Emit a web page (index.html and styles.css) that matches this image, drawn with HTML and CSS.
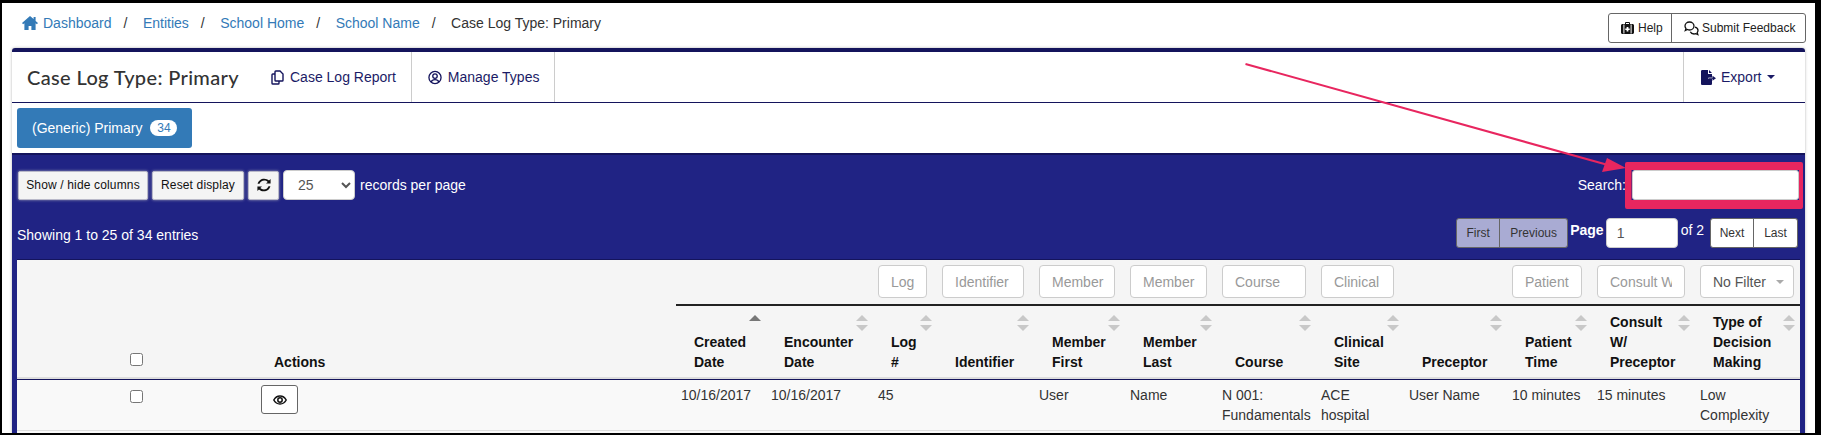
FILE: index.html
```html
<!DOCTYPE html>
<html lang="en">
<head>
<meta charset="utf-8">
<title>Case Log Type: Primary</title>
<link rel="stylesheet" href="styles.css">
</head>
<body>
<div class="page">
  <div class="topbar">
    <nav class="crumbs">
      <svg class="home-icon" viewBox="0 0 16 14"><path d="M8 0 0 7l1.1 1.3L2.400 7.200V14h4.200v-4h2.800v4h4.200V7.200l1.300 1.100L16 7l-2.400-2.100V1h-2v2.100z"/></svg>
      <a class="crumb">Dashboard</a><span class="sep">/</span>
      <a class="crumb">Entities</a><span class="sep">/</span>
      <a class="crumb">School Home</a><span class="sep">/</span>
      <a class="crumb">School Name</a><span class="sep">/</span>
      <span class="crumb-current">Case Log Type: Primary</span>
    </nav>
    <div class="help-group">
      <a class="help-btn help-first">
        <svg class="ico-help" viewBox="0 0 13 12"><path d="M4 2V1.200C4 .5 4.500 0 5.200 0h2.600C8.500 0 9 .5 9 1.200V2h2.500c.8 0 1.500.7 1.500 1.500v7c0 .8-.7 1.500-1.500 1.500h-10C.7 12 0 11.300 0 10.500v-7C0 2.700.7 2 1.500 2zm1-1v1h3V1zM2.400 2.500v9h1v-9zm7.200 0v9h1v-9zM5.600 5v1.500H4.300v1.400h1.300v1.500h1.800V7.900h1.300V6.500H7.400V5z" fill-rule="evenodd"/></svg>
        Help
      </a>
      <a class="help-btn help-second">
        <svg class="ico-comments" viewBox="0 0 15 15"><path d="M5.500 1C3 1 1 2.800 1 5c0 1 .4 1.800 1 2.500L1.300 9.500 3.500 8.500c.6.300 1.300.5 2 .5 2.500 0 4.500-1.800 4.500-4S8 1 5.500 1z"/><path d="M11 6.200c1.700.4 3 1.800 3 3.400 0 .8-.3 1.500-.8 2.100l.6 1.800-2-.9c-.5.200-1.100.4-1.800.4-1.700 0-3.100-.9-3.700-2.200"/></svg>
        Submit Feedback
      </a>
    </div>
  </div>

  <section class="card">
    <header class="card-head">
      <h1 class="card-title">Case Log Type: Primary</h1>
      <a class="head-link">
        <svg class="ico-line" viewBox="0 0 14 15"><path d="M5 1.800C5 1.300 5.400 1 5.800 1h4.200l3 3v6.200c0 .5-.4.800-.8.800H5.800c-.4 0-.8-.3-.8-.8z"/><path d="M5 4H2.800C2.300 4 2 4.400 2 4.800v8.400c0 .5.300.8.800.8h5.400c.5 0 .8-.3.8-.8V11"/></svg>
        Case Log Report
      </a>
      <a class="head-link">
        <svg class="ico-line" viewBox="0 0 15 15"><circle cx="7.500" cy="7.500" r="6.500"/><circle cx="7.500" cy="6" r="2.400"/><path d="M3.400 12.300c.6-1.700 2-2.500 4.100-2.500s3.500.8 4.100 2.500"/></svg>
        Manage Types
      </a>
      <a class="head-link export-link">
        <svg class="ico-export" viewBox="0 0 15 15"><path d="M1.300 0H7v4h4v3.500H7.500v1.500H11v4.700c0 .7-.6 1.300-1.300 1.300H1.300C.6 15 0 14.400 0 13.700V1.300C0 .6.600 0 1.300 0zM8 0l3 3H8z"/><path d="M8 7.800h3.500V5.800L15 8.300l-3.500 2.500v-2H8z"/></svg>
        Export
        <span class="caret"></span>
      </a>
    </header>

    <div class="tabs">
      <a class="tab">(Generic) Primary <span class="badge">34</span></a>
    </div>

    <div class="panel">
      <div class="toolbar">
        <div class="tools">
          <button class="tool-btn tool-show">Show / hide columns</button>
          <button class="tool-btn tool-reset">Reset display</button>
          <button class="tool-btn tool-icon">
            <svg class="ico-refresh" viewBox="0 0 14 14"><path d="M13.600 1v4.600H9L10.700 3.900C9.800 3 8.500 2.500 7.200 2.500 5 2.500 3.200 3.800 2.500 5.800H.6C1.300 2.800 4 .7 7.200.7c1.800 0 3.500.7 4.800 1.900zM.4 13V8.400H5L3.300 10.100c.9.900 2.200 1.400 3.500 1.400 2.200 0 4-1.300 4.700-3.300h1.900c-.7 3-3.400 5.100-6.600 5.100-1.800 0-3.500-.7-4.800-1.900z"/></svg>
          </button>
          <select class="page-size"><option>25</option></select>
          <span class="per-page">records per page</span>
        </div>
        <label class="search"><span>Search:</span><input class="search-input" type="text"></label>
      </div>

      <div class="pager-row">
        <span class="info">Showing 1 to 25 of 34 entries</span>
        <div class="pager">
          <div class="pager-group">
            <a class="pg-btn pg-off pg-first">First</a><a class="pg-btn pg-off pg-prev">Previous</a>
          </div>
          <strong class="pg-label">Page</strong>
          <input class="pg-input" type="text" value="1">
          <span class="pg-of">of 2</span>
          <div class="pager-group">
            <a class="pg-btn pg-next">Next</a><a class="pg-btn pg-last">Last</a>
          </div>
        </div>
      </div>

      <table class="grid">
        <colgroup>
          <col class="c-check"><col class="c-actions"><col class="c-created"><col class="c-enc"><col class="c-log"><col class="c-id"><col class="c-first"><col class="c-last"><col class="c-course"><col class="c-site"><col class="c-prec"><col class="c-time"><col class="c-consult"><col class="c-type">
        </colgroup>
        <thead>
          <tr class="filters">
            <td class="no-rule"></td>
            <td class="no-rule"></td>
            <td></td>
            <td></td>
            <td><input class="filter" placeholder="Log"></td>
            <td><input class="filter" placeholder="Identifier"></td>
            <td><input class="filter filter-tight" placeholder="Member"></td>
            <td><input class="filter filter-tight" placeholder="Member"></td>
            <td><input class="filter" placeholder="Course"></td>
            <td><input class="filter" placeholder="Clinical"></td>
            <td></td>
            <td><input class="filter" placeholder="Patient"></td>
            <td><input class="filter" placeholder="Consult W/Preceptor"></td>
            <td class="last-filter"><div class="filter filter-select">No Filter<span class="caret caret-light"></span></div></td>
          </tr>
          <tr class="heads">
            <th class="th-check"><input type="checkbox"></th>
            <th>Actions</th>
            <th>Created<br>Date<span class="sort sort-up"></span></th>
            <th>Encounter<br>Date<span class="sort"></span></th>
            <th>Log<br>#<span class="sort"></span></th>
            <th>Identifier<span class="sort"></span></th>
            <th>Member<br>First<span class="sort"></span></th>
            <th>Member<br>Last<span class="sort"></span></th>
            <th>Course<span class="sort"></span></th>
            <th>Clinical<br>Site<span class="sort"></span></th>
            <th>Preceptor<span class="sort"></span></th>
            <th>Patient<br>Time<span class="sort"></span></th>
            <th>Consult<br>W/<br>Preceptor<span class="sort"></span></th>
            <th>Type of<br>Decision<br>Making<span class="sort"></span></th>
          </tr>
        </thead>
        <tbody>
          <tr>
            <td class="td-check"><input type="checkbox"></td>
            <td class="td-action"><button class="eye-btn"><svg class="ico-eye" viewBox="0 0 14 10"><path d="M.8 5C2.200 2.400 4.400 1 7 1s4.800 1.400 6.200 4C11.800 7.600 9.600 9 7 9S2.200 7.600.8 5z"/><circle cx="7" cy="5" r="2.200"/></svg></button></td>
            <td>10/16/2017</td>
            <td>10/16/2017</td>
            <td>45</td>
            <td></td>
            <td>User</td>
            <td>Name</td>
            <td>N 001:<br>Fundamentals</td>
            <td>ACE<br>hospital</td>
            <td>User Name</td>
            <td>10 minutes</td>
            <td>15 minutes</td>
            <td>Low<br>Complexity</td>
          </tr>
          <tr class="next-row"><td colspan="14"></td></tr>
        </tbody>
      </table>
    </div>
  </section>

  <svg class="annotation" viewBox="2 3 1813 430">
    <line x1="1245.500" y1="64" x2="1608" y2="165" />
    <path class="fill" d="M1602 172 1607 158 1626 168z"/>
    <path class="fill" fill-rule="evenodd" d="M1627 162H1801a2 2 0 0 1 2 2V207a2 2 0 0 1-2 2H1627a2 2 0 0 1-2-2V164a2 2 0 0 1 2-2zM1631.500 170V200H1799V170z"/>
  </svg>
</div>
</body>
</html>
```

FILE: styles.css
```css
* { box-sizing: border-box; }
html, body { margin: 0; height: 435px; overflow: hidden; background: #000; }
body { font: 14px/20px "Liberation Sans", Arial, sans-serif; color: #333; }
a { text-decoration: none; }

.page {
  position: relative;
  margin: 3px 6px 0 2px;
  height: 430px;
  background: #fff;
  overflow: hidden;
}

.topbar { display: flex; justify-content: space-between; height: 45px; padding: 0 9px 0 20px; }
.crumbs { display: flex; align-items: center; height: 20px; margin-top: 10px; }
.home-icon { width: 16px; height: 14px; margin: 0 5px 0 0; fill: #337ab7; }
.crumb { color: #337ab7; }
.crumb-current { color: #333; }
.sep { margin: 0 15.500px 0 12px; color: #333; }

.help-group { display: flex; height: 30px; margin-top: 10px; border: 1px solid #666; border-radius: 3px; font-size: 12px; color: #222; }
.help-btn { display: flex; align-items: center; color: #222; gap: 4px; padding: 0 0 0 12px; white-space: nowrap; }
.help-first { border-right: 1px solid #666; width: 63px; }
.help-second { width: 133px; gap: 3px; }
.ico-help { width: 13px; height: 12px; fill: #111; }
.ico-comments { width: 15px; height: 15px; fill: none; stroke: #111; stroke-width: 1.300; }

.card {
  margin: 0 10px;
  border-top: 4px solid #14145c;
  border-radius: 3px 3px 0 0;
  box-shadow: 0 0 3px rgba(0, 0, 0, .3);
}
.card-head { display: flex; height: 51px; border-bottom: 1px solid #14145c; }
.card-title { width: 242px; margin: 0; padding-left: 15px; white-space: nowrap; font: 500 20px/50px Lato, "Noto Sans", sans-serif; letter-spacing: .35px; color: #333; }
.head-link { display: flex; align-items: center; gap: 6px; padding: 0 15px 0 16px; color: #1b1b66; border-right: 1px solid #ccc; }
.ico-line { width: 14px; height: 15px; fill: none; stroke: #14145c; stroke-width: 1.400; }
.export-link { margin-left: auto; padding: 0 0 0 17px; width: 122px; border-right: 0; border-left: 1px solid #ccc; }
.ico-export { width: 15px; height: 15px; fill: #14145c; margin-right: -1px; }
.caret { display: inline-block; width: 0; height: 0; margin-left: 0; border-top: 4px solid #1b1b66; border-left: 4px solid transparent; border-right: 4px solid transparent; }

.tabs { display: flex; height: 50px; padding: 5px; }
.tab { display: flex; align-items: center; gap: 8px; width: 175px; height: 40px; padding-left: 15px; background: #337ab7; border-radius: 3px; color: #fff; }
.badge { width: 27px; height: 16px; border-radius: 8px; background: #fff; color: #337ab7; font-size: 12px; line-height: 16px; text-align: center; }

.panel { border-top: 2px solid #14145c; height: 281px; background: #202384; padding: 15px 5px 0; color: #fff; }
.toolbar { display: flex; justify-content: space-between; align-items: center; height: 30px; padding: 0 1px 0 1px; }
.tools { display: flex; align-items: center; gap: 4px; }
.tool-btn { height: 29px; margin: 0; padding: 0; border: 1px solid #b9b9c9; border-radius: 2px; background: #f4f4f4; box-shadow: 0 0 3px #a0a0b8; font: 12px "Liberation Sans", Arial, sans-serif; letter-spacing: .15px; color: #111; }
.tool-show { width: 130px; }
.tool-reset { width: 92px; }
.tool-icon { width: 31px; display: flex; align-items: center; justify-content: center; }
.ico-refresh { width: 14px; height: 14px; fill: #111; }
.page-size { width: 72px; height: 30px; padding-left: 10px; background: #fff; border: 1px solid #ccc; border-radius: 4px; font: 14px "Liberation Sans", Arial, sans-serif; color: #555; }
.per-page { margin-left: 1px; }
.search { display: flex; align-items: center; gap: 6px; }
.search-input { width: 167px; height: 30px; background: #fff; border: 1px solid #ccc; border-radius: 3px; }

.pager-row { display: flex; justify-content: space-between; height: 30px; margin-top: 18px; padding-right: 2px; }
.info { line-height: 34px; }
.pager { display: flex; align-items: flex-start; }
.pager-group { display: flex; font-size: 12px; }
.pg-btn { display: block; height: 30px; line-height: 28px; text-align: center; border: 1px solid #666; color: #333; background: #fff; }
.pg-off { background: #a9abd3; }
.pg-first { width: 44px; border-radius: 3px 0 0 3px; }
.pg-prev { width: 68px; border-left: 0; border-radius: 0 3px 3px 0; }
.pg-next { width: 44px; border-radius: 3px 0 0 3px; }
.pg-last { width: 44px; border-left: 0; border-radius: 0 3px 3px 0; }
.pg-label { margin: 2px 2px 0 2px; }
.pg-input { width: 72px; height: 30px; padding: 0 10px; border: 1px solid #ccc; border-radius: 4px; font: 14px "Liberation Sans", Arial, sans-serif; color: #555; background: #fff; }
.pg-of { margin: 2px 6px 0 3px; }

.grid { width: 1783px; margin-top: 11px; table-layout: fixed; border-collapse: separate; border-spacing: 0; border-top: 1px solid #14145c; background: #f5f5f5; color: #333; }
.c-check { width: 239px; } .c-actions { width: 420px; } .c-created { width: 90px; } .c-enc { width: 107px; }
.c-log { width: 64px; } .c-id { width: 97px; } .c-first { width: 91px; } .c-last { width: 92px; }
.c-course { width: 99px; } .c-site { width: 88px; } .c-prec { width: 103px; } .c-time { width: 85px; }
.c-consult { width: 103px; } .c-type { width: 105px; }

.filters td { height: 45px; padding: 5px 10px 6px 5px; border-bottom: 2px solid #222; }
.filters .no-rule { border-bottom: 0; }
.filters .last-filter { padding-right: 6px; }
.filter { display: block; width: 100%; height: 33px; padding: 6px 12px; border: 1px solid #ccc; border-radius: 4px; background: #fff; font: 14px/20px "Liberation Sans", Arial, sans-serif; color: #555; }
.filter::placeholder { color: #999; opacity: 1; }
.filter-tight { padding-right: 4px; }
.filter-select { display: flex; align-items: center; justify-content: space-between; padding-right: 9px; }
.caret-light { border-top-color: #aaa; }

.heads th { position: relative; height: 72px; padding: 6px 0 5px 18px; vertical-align: bottom; text-align: left; white-space: nowrap; color: #111; border-bottom: 2px solid #ddd; }
.heads .th-check { padding: 0 0 9px; text-align: center; }
input[type="checkbox"] { margin: 0; width: 13px; height: 13px; vertical-align: middle; }
.sort { position: absolute; right: 5px; top: 9px; width: 12px; height: 16px; }
.sort::before, .sort::after { content: ""; position: absolute; left: 0; border-left: 6px solid transparent; border-right: 6px solid transparent; }
.sort::before { top: 0; border-bottom: 6px solid #c8c8c8; }
.sort::after { bottom: 0; border-top: 6px solid #c8c8c8; }
.sort-up::before { border-bottom-color: #777; }
.sort-up::after { display: none; }

tbody td { height: 51px; padding: 5px 5px; vertical-align: top; border-top: 1px solid #14145c; border-bottom: 1px solid #ddd; background: #f9f9f9; white-space: nowrap; color: #333; }
tbody .td-check { text-align: center; padding-top: 5px; }
tbody .next-row td { height: 30px; border: 0; }
.eye-btn { display: flex; align-items: center; justify-content: center; width: 37px; height: 29px; padding: 0; border: 1px solid #666; border-radius: 3px; background: #fff; }
.ico-eye { width: 14px; height: 10px; fill: none; stroke: #111; stroke-width: 1.500; }

.annotation { position: absolute; left: 0; top: 0; width: 1813px; height: 430px; pointer-events: none; }
.annotation line { stroke: #e8265f; stroke-width: 2; }
.annotation .fill { fill: #e8265f; }
```
